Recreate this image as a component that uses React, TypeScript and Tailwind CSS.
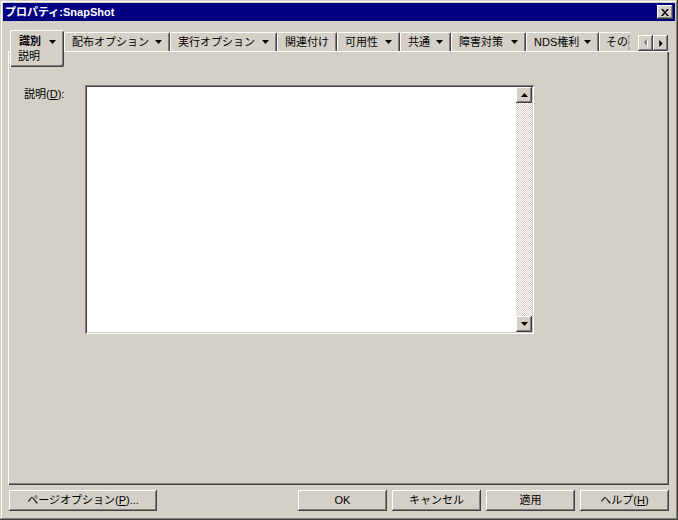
import React from 'react';

const raised =
  'shadow-[inset_-1px_-1px_0_#404040,inset_1px_1px_0_#ffffff,inset_-2px_-2px_0_#808080,inset_2px_2px_0_#d4d0c8]';

const font = { fontFamily: '"Liberation Sans", "Noto Sans CJK JP", sans-serif' };

const Down = ({ color = '#000000' }: { color?: string }) => (
  <svg width="7" height="4" viewBox="0 0 7 4" className="shrink-0">
    <polygon points="0,0 7,0 3.5,4" fill={color} />
  </svg>
);

const Tab = ({ label, w, arrow = true }: { label: string; w: string; arrow?: boolean }) => (
  <div
    className={`${w} h-[19px] shrink-0 flex items-center justify-between pl-[7px] pr-[7px] border-t border-l border-r border-t-white border-l-white border-r-[#404040] shadow-[inset_-1px_0_0_#808080] rounded-t-[2px]`}
  >
    <span className="text-[11px] leading-none text-black whitespace-nowrap">{label}</span>
    {arrow && <Down />}
  </div>
);

const Btn = ({ children, w }: { children: React.ReactNode; w: string }) => (
  <button className={`${w} h-[21px] ${raised} bg-[#d4d0c8] text-[11px] text-black flex items-center justify-center`}>
    {children}
  </button>
);

export default function App() {
  return (
    <div
      style={font}
      className="w-[678px] h-[520px] bg-[#d4d0c8] p-[3px] flex flex-col shadow-[inset_-1px_-1px_0_#404040,inset_1px_1px_0_#d4d0c8,inset_-2px_-2px_0_#808080,inset_2px_2px_0_#ffffff]"
    >
      {/* title bar */}
      <div className="h-[18px] shrink-0 bg-[#000080] flex items-center justify-between pl-[2px] pr-[2px]">
        <span className="text-white font-bold text-[11px] leading-none">プロパティ:SnapShot</span>
        <div className={`w-[16px] h-[14px] bg-[#d4d0c8] ${raised} flex items-center justify-center`}>
          <svg width="8" height="7" viewBox="0 0 8 7">
            <path d="M0 0h2l2 2.5L6 0h2L5 3.5 8 7H6L4 4.5 2 7H0l3-3.5z" fill="#000" />
          </svg>
        </div>
      </div>

      <div className="flex-1 flex flex-col pl-[5px] pr-[6px] pb-[6px]">
        {/* tabs */}
        <div className="mt-[9px] h-[21px] shrink-0 flex items-end pl-[2px]">
          <div className="relative z-10 -mb-[16px] w-[54px] h-[37px] shrink-0 bg-[#d4d0c8] border-t border-l border-white shadow-[inset_-1px_-1px_0_#404040,inset_-2px_-2px_0_#808080] rounded-t-[2px] rounded-br-[2px] pl-[8px] pr-[8px] pt-[5px]">
            <div className="flex items-center justify-between">
              <span className="text-[11px] leading-none font-bold text-black">識別</span>
              <Down />
            </div>
            <div className="text-[11px] leading-none text-black mt-[4px] -ml-[1px]">説明</div>
          </div>
          <Tab label="配布オプション" w="w-[106px]" />
          <Tab label="実行オプション" w="w-[107px]" />
          <Tab label="関連付け" w="w-[60px]" arrow={false} />
          <Tab label="可用性" w="w-[63px]" />
          <Tab label="共通" w="w-[51px]" />
          <Tab label="障害対策" w="w-[75px]" />
          <Tab label="NDS権利" w="w-[73px]" />
          <div className="w-[31px] h-[19px] shrink-0 flex items-center pl-[6px] border-t border-l border-white rounded-tl-[2px]">
            <span className="text-[11px] leading-none text-black whitespace-nowrap">その</span>
            <svg width="2" height="15" viewBox="0 0 2 15" className="ml-auto">
              <path d="M1 0v3M0 3v3M1 6v3M0 9v3M1 12v3" stroke="#808080" strokeWidth="1" />
            </svg>
          </div>
          <div className="ml-auto mr-[1px] flex h-[16px]">
            <div className={`w-[15px] h-[16px] ${raised} flex items-center justify-center`}>
              <svg width="5" height="8" viewBox="0 0 5 8">
                <polygon points="5,1 5,8 1.5,4.5" fill="#ffffff" />
                <polygon points="4,0 4,7 0.5,3.5" fill="#808080" />
              </svg>
            </div>
            <div className={`w-[15px] h-[16px] ${raised} flex items-center justify-center`}>
              <svg width="4" height="7" viewBox="0 0 4 8">
                <polygon points="0,0 0,8 4,4" fill="#000000" />
              </svg>
            </div>
          </div>
        </div>

        {/* panel */}
        <div className="flex-1 border-t border-l border-white shadow-[inset_-1px_-1px_0_#404040,inset_-2px_-2px_0_#808080] flex items-start pt-[33px] pl-[15px]">
          <div className="w-[61px] mt-[2px] text-[11px] leading-[14px] text-black">
            説明(<span className="underline">D</span>):
          </div>
          <div className="w-[449px] h-[249px] bg-white shadow-[inset_1px_1px_0_#808080,inset_-1px_-1px_0_#ffffff,inset_2px_2px_0_#404040,inset_-2px_-2px_0_#d4d0c8] p-[2px] flex justify-end">
            <div className="w-[16px] h-full flex flex-col">
              <div className={`h-[16px] w-[16px] bg-[#d4d0c8] ${raised} flex items-center justify-center`}>
                <svg width="7" height="4" viewBox="0 0 7 4">
                  <polygon points="3.5,0 7,4 0,4" fill="#000" />
                </svg>
              </div>
              <div className="flex-1 bg-[repeating-conic-gradient(#ffffff_0%_25%,#d4d0c8_0%_50%)] bg-[length:2px_2px]" />
              <div className={`h-[16px] w-[16px] bg-[#d4d0c8] ${raised} flex items-center justify-center`}>
                <Down />
              </div>
            </div>
          </div>
        </div>

        {/* buttons */}
        <div className="mt-[5px] shrink-0 flex items-center">
          <div className="ml-[1px]">
            <Btn w="w-[148px]">
              ページオプション(<span className="underline">P</span>)...
            </Btn>
          </div>
          <div className="ml-auto flex gap-[5px]">
            <Btn w="w-[89px]">OK</Btn>
            <Btn w="w-[89px]">キャンセル</Btn>
            <Btn w="w-[89px]">適用</Btn>
            <Btn w="w-[89px]">
              ヘルプ(<span className="underline">H</span>)
            </Btn>
          </div>
        </div>
      </div>
    </div>
  );
}
